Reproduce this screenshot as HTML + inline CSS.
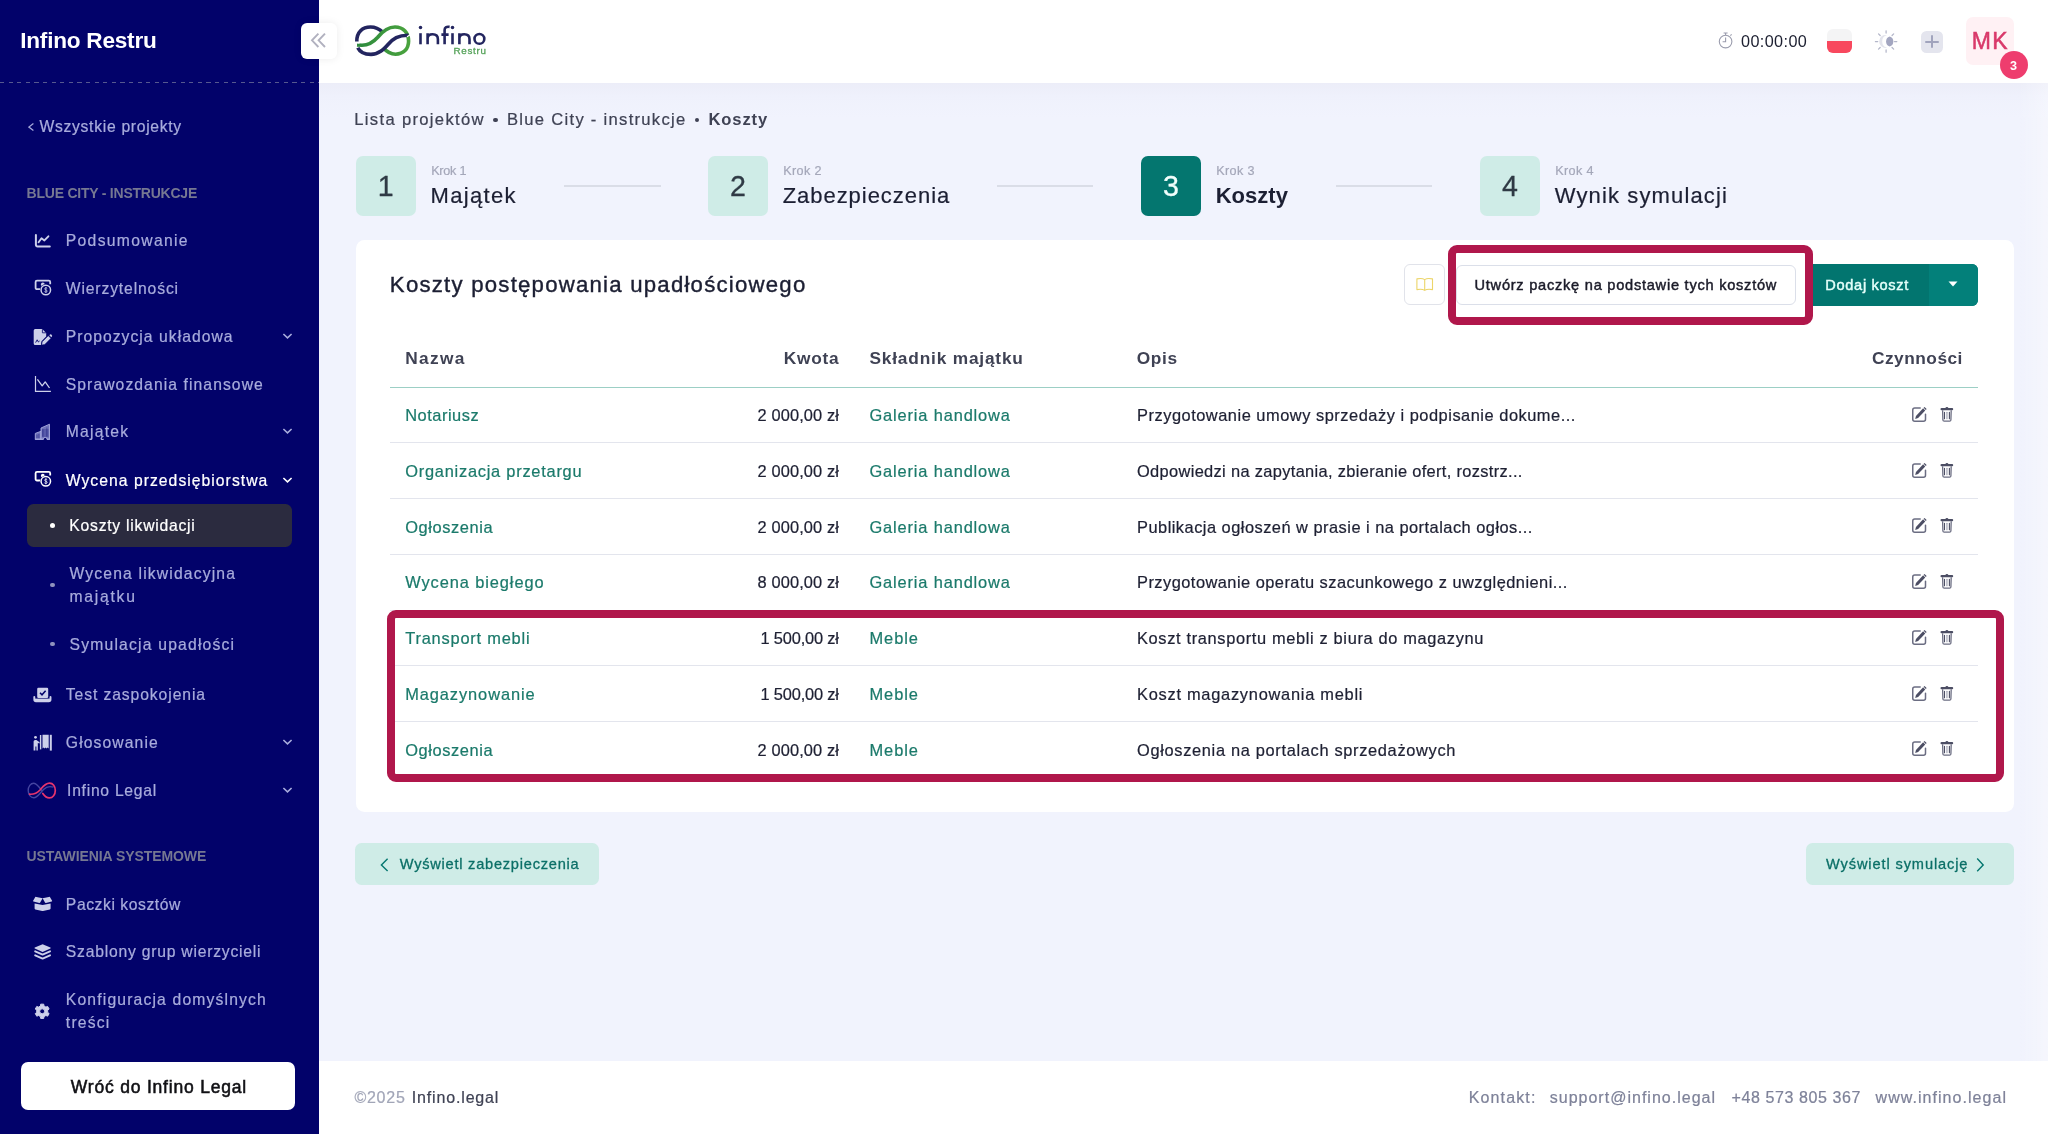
<!DOCTYPE html>
<html lang="pl"><head><meta charset="utf-8"><title>Infino Restru - Koszty</title><style>
html,body{margin:0;padding:0}
body{width:2048px;height:1134px;position:relative;overflow:hidden;background:#f1f3fd;will-change:transform;font-family:"Liberation Sans", sans-serif;}
.b{position:absolute;box-sizing:border-box;display:block}
.t{position:absolute;white-space:pre;line-height:1;font-family:"Liberation Sans", sans-serif;}
</style></head>
<body>
<div class="b" style="left:319px;top:0px;width:1729px;height:83px;background:#ffffff;"></div>
<div class="b" style="left:319px;top:83px;width:1729px;height:34px;background:linear-gradient(#ecedf8,#eff1fc 40%,#f1f3fd);"></div>
<div class="b" style="left:2018px;top:83px;width:30px;height:978px;background:linear-gradient(90deg,rgba(255,255,255,0),rgba(255,255,255,.32));"></div>
<div class="b" style="left:319px;top:1061px;width:1729px;height:73px;background:#ffffff;"></div>
<div class="b" style="left:0px;top:0px;width:319px;height:1134px;background:#02026a;"></div>
<div class="b" style="left:0;top:82px;width:319px;height:1px;background:repeating-linear-gradient(90deg,#56588f 0,#56588f 4.2px,transparent 4.2px,transparent 8.6px)"></div>
<span class="t" style="left:20.24px;top:30.27px;font-size:22.6px;color:#ffffff;font-weight:700;letter-spacing:-0.234px;">Infino Restru</span>
<div class="b" style="left:301px;top:22.5px;width:36px;height:36px;background:#ffffff;border-radius:6px;box-shadow:0 0 8px rgba(0,0,0,.08);"></div>
<svg class="b" style="left:310px;top:32px;" width="17" height="17" viewBox="0 0 17 17"><path d="M8.4 1.6 L2 8.3 L8.4 15 M15 1.6 L8.6 8.3 L15 15" fill="none" stroke="#b1b1bf" stroke-width="1.9"/></svg>
<span class="t" style="left:39.46px;top:119.01px;font-size:15.7px;color:#a8acdc;letter-spacing:0.697px;-webkit-text-stroke:0.22px #a8acdc;">Wszystkie projekty</span>
<svg class="b" style="left:28px;top:121px;" width="8" height="12" viewBox="0 0 8 12"><path d="M5.4 2.6 L0.9 6.1 L5.4 9.6" fill="none" stroke="#a8acdc" stroke-width="1.25"/></svg>
<span class="t" style="left:26.56px;top:186.35px;font-size:14px;color:#767892;font-weight:700;letter-spacing:-0.231px;">BLUE CITY - INSTRUKCJE</span>
<span class="t" style="left:65.76px;top:233.21px;font-size:15.7px;color:#a8acdc;letter-spacing:1.324px;-webkit-text-stroke:0.22px #a8acdc;">Podsumowanie</span>
<span class="t" style="left:65.76px;top:281.21px;font-size:15.7px;color:#a8acdc;letter-spacing:0.862px;-webkit-text-stroke:0.22px #a8acdc;">Wierzytelności</span>
<span class="t" style="left:65.76px;top:329.31px;font-size:15.7px;color:#a8acdc;letter-spacing:1.027px;-webkit-text-stroke:0.22px #a8acdc;">Propozycja układowa</span>
<svg class="b" style="left:281.9px;top:331.6px;" width="11" height="8" viewBox="0 0 11 8"><path d="M1.4 2 L5.5 5.9 L9.6 2" fill="none" stroke="#a8acdc" stroke-width="1.6"/></svg>
<span class="t" style="left:65.76px;top:377.21px;font-size:15.7px;color:#a8acdc;letter-spacing:1.077px;-webkit-text-stroke:0.22px #a8acdc;">Sprawozdania finansowe</span>
<span class="t" style="left:65.76px;top:424.11px;font-size:15.7px;color:#a8acdc;letter-spacing:1.233px;-webkit-text-stroke:0.22px #a8acdc;">Majątek</span>
<svg class="b" style="left:281.9px;top:427.4px;" width="11" height="8" viewBox="0 0 11 8"><path d="M1.4 2 L5.5 5.9 L9.6 2" fill="none" stroke="#a8acdc" stroke-width="1.6"/></svg>
<span class="t" style="left:65.76px;top:473.21px;font-size:15.7px;color:#ffffff;letter-spacing:1.042px;-webkit-text-stroke:0.22px #ffffff;">Wycena przedsiębiorstwa</span>
<svg class="b" style="left:281.9px;top:475.5px;" width="11" height="8" viewBox="0 0 11 8"><path d="M1.4 2 L5.5 5.9 L9.6 2" fill="none" stroke="#ffffff" stroke-width="1.6"/></svg>
<div class="b" style="left:27.1px;top:503.9px;width:264.6px;height:43.1px;background:#2b2b3f;border-radius:6.5px;"></div>
<div class="b" style="left:49.8px;top:522.8px;width:5.4px;height:5.4px;background:#ffffff;border-radius:3px;"></div>
<span class="t" style="left:69.36px;top:517.91px;font-size:15.7px;color:#ffffff;letter-spacing:0.756px;-webkit-text-stroke:0.22px #ffffff;">Koszty likwidacji</span>
<div class="b" style="left:50.3px;top:582.5px;width:4.4px;height:4.4px;background:#8f92bd;border-radius:2.2px;"></div>
<span class="t" style="left:69.56px;top:565.91px;font-size:15.7px;color:#a8acdc;letter-spacing:1.152px;-webkit-text-stroke:0.22px #a8acdc;">Wycena likwidacyjna</span>
<span class="t" style="left:69.56px;top:589.41px;font-size:15.7px;color:#a8acdc;letter-spacing:1.733px;-webkit-text-stroke:0.22px #a8acdc;">majątku</span>
<div class="b" style="left:50.3px;top:642.1px;width:4.4px;height:4.4px;background:#8f92bd;border-radius:2.2px;"></div>
<span class="t" style="left:69.56px;top:637.31px;font-size:15.7px;color:#a8acdc;letter-spacing:1.195px;-webkit-text-stroke:0.22px #a8acdc;">Symulacja upadłości</span>
<span class="t" style="left:65.86px;top:686.81px;font-size:15.7px;color:#a8acdc;letter-spacing:0.902px;-webkit-text-stroke:0.22px #a8acdc;">Test zaspokojenia</span>
<span class="t" style="left:65.86px;top:734.71px;font-size:15.7px;color:#a8acdc;letter-spacing:1.096px;-webkit-text-stroke:0.22px #a8acdc;">Głosowanie</span>
<svg class="b" style="left:281.9px;top:738.2px;" width="11" height="8" viewBox="0 0 11 8"><path d="M1.4 2 L5.5 5.9 L9.6 2" fill="none" stroke="#a8acdc" stroke-width="1.6"/></svg>
<span class="t" style="left:67.06px;top:783.11px;font-size:15.7px;color:#a8acdc;letter-spacing:0.728px;-webkit-text-stroke:0.22px #a8acdc;">Infino Legal</span>
<svg class="b" style="left:281.9px;top:786px;" width="11" height="8" viewBox="0 0 11 8"><path d="M1.4 2 L5.5 5.9 L9.6 2" fill="none" stroke="#a8acdc" stroke-width="1.6"/></svg>
<span class="t" style="left:26.56px;top:849.45px;font-size:14px;color:#767892;font-weight:700;letter-spacing:-0.076px;">USTAWIENIA SYSTEMOWE</span>
<span class="t" style="left:65.86px;top:897.21px;font-size:15.7px;color:#a8acdc;letter-spacing:0.562px;-webkit-text-stroke:0.22px #a8acdc;">Paczki kosztów</span>
<span class="t" style="left:65.86px;top:944.01px;font-size:15.7px;color:#a8acdc;letter-spacing:0.775px;-webkit-text-stroke:0.22px #a8acdc;">Szablony grup wierzycieli</span>
<span class="t" style="left:65.86px;top:991.71px;font-size:15.7px;color:#a8acdc;letter-spacing:1.160px;-webkit-text-stroke:0.22px #a8acdc;">Konfiguracja domyślnych</span>
<span class="t" style="left:65.86px;top:1015.41px;font-size:15.7px;color:#a8acdc;letter-spacing:1.170px;-webkit-text-stroke:0.22px #a8acdc;">treści</span>
<div class="b" style="left:21px;top:1062px;width:274px;height:48px;background:#ffffff;border-radius:7px;"></div>
<span class="t" style="left:70.76px;top:1078.99px;font-size:17.5px;color:#101014;letter-spacing:0.804px;-webkit-text-stroke:0.55px #101014;">Wróć do Infino Legal</span>
<svg class="b" style="left:34px;top:233px;overflow:visible;" width="18" height="16" viewBox="34 233 18 16"><path d="M35.9 234.9 V244.8 A1.6 1.6 0 0 0 37.5 246.4 H49.8" fill="none" stroke="#cdd0ea" stroke-width="2" stroke-linecap="round"/><path d="M38.6 242.2 L41.5 238.3 L44.4 240.4 L48.4 236.3" fill="none" stroke="#cdd0ea" stroke-width="1.9" stroke-linecap="round" stroke-linejoin="round"/></svg>
<svg class="b" style="left:34px;top:279px;overflow:visible;" width="18" height="18" viewBox="34 279 18 18"><g transform="translate(0,0)"><path d="M40.5 289.2 H37 A1.4 1.4 0 0 1 35.6 287.8 V282 A1.4 1.4 0 0 1 37 280.6 H48.8 A1.4 1.4 0 0 1 50.2 282 V284.2" fill="none" stroke="#cdd0ea" stroke-width="1.8"/><circle cx="42.8" cy="284.4" r="1.9" fill="#cdd0ea"/><circle cx="45.8" cy="290" r="5.9" fill="#02026a"/><circle cx="45.8" cy="290" r="4.75" fill="none" stroke="#cdd0ea" stroke-width="1.5"/><path d="M47.2 288.4 C46.6 287.6 44.6 287.7 44.6 288.9 C44.6 290.2 47.2 289.7 47.2 291.1 C47.2 292.3 45.1 292.4 44.4 291.5 M45.9 287 V293" fill="none" stroke="#cdd0ea" stroke-width="0.8"/></g></svg>
<svg class="b" style="left:33px;top:328px;overflow:visible;" width="19" height="18" viewBox="33 328 19 18"><path d="M35.2 329 H42.2 L46.2 333 V336.5 L41.5 341.2 L40.9 345 H35.2 A1.5 1.5 0 0 1 33.7 343.5 V330.5 A1.5 1.5 0 0 1 35.2 329 Z" fill="#cdd0ea"/><path d="M42.4 329.2 V332.8 H46" fill="none" stroke="#02026a" stroke-width="0.8"/><path d="M35.6 342.6 L37.2 339.8 L38.4 342 L39.6 341" fill="none" stroke="#02026a" stroke-width="0.9"/><path d="M42.2 341.8 L48.3 335.7 L50.9 338.3 L44.8 344.4 L41.7 345 Z" fill="#cdd0ea" stroke="#02026a" stroke-width="0.5"/><path d="M49.3 335.3 L50 334.6 A1 1 0 0 1 51.3 334.6 L51.9 335.3 A1 1 0 0 1 51.9 336.6 L51.3 337.3 Z" fill="#cdd0ea"/></svg>
<svg class="b" style="left:34px;top:375px;overflow:visible;" width="18" height="18" viewBox="34 375 18 18"><path d="M35.5 376 V391.3 H50.9" fill="none" stroke="#cdd0ea" stroke-width="1.2"/><path d="M37.4 379.4 L42.2 385.8 L45.2 381.9 L49.5 388" fill="none" stroke="#cdd0ea" stroke-width="1.3" stroke-linejoin="round"/></svg>
<svg class="b" style="left:34px;top:423px;overflow:visible;" width="17" height="17" viewBox="34 423 17 17"><path d="M35.3 439.2 V433.4 L41 431.3 V439.2 Z" fill="#6f72bb" stroke="#a9acdf" stroke-width="0.9" stroke-linejoin="round"/><path d="M41 439.2 V428 L49.5 424.2 V439.2 H47 A1.8 1.8 0 0 0 43.4 439.2 Z" fill="#6f72bb" stroke="#a9acdf" stroke-width="0.9" stroke-linejoin="round"/><path d="M37 434.6 V438.4 M38.9 434 V438.4 M42.9 429.4 V436.6 M46.9 427.6 V436.6 M42 430 H48.6 M42 432 H48.6 M42 434 H48.6 M42 436 H48.6" stroke="#02026a" stroke-width="0.7" stroke-opacity="0.6" fill="none"/><path d="M34.9 439.3 H43.6 M46.8 439.3 H50" stroke="#a9acdf" stroke-width="1"/></svg>
<svg class="b" style="left:34px;top:470px;overflow:visible;" width="18" height="18" viewBox="34 470 18 18"><g transform="translate(0,191.3)"><path d="M40.5 289.2 H37 A1.4 1.4 0 0 1 35.6 287.8 V282 A1.4 1.4 0 0 1 37 280.6 H48.8 A1.4 1.4 0 0 1 50.2 282 V284.2" fill="none" stroke="#ffffff" stroke-width="1.8"/><circle cx="42.8" cy="284.4" r="1.9" fill="#ffffff"/><circle cx="45.8" cy="290" r="5.9" fill="#02026a"/><circle cx="45.8" cy="290" r="4.75" fill="none" stroke="#ffffff" stroke-width="1.5"/><path d="M47.2 288.4 C46.6 287.6 44.6 287.7 44.6 288.9 C44.6 290.2 47.2 289.7 47.2 291.1 C47.2 292.3 45.1 292.4 44.4 291.5 M45.9 287 V293" fill="none" stroke="#ffffff" stroke-width="0.8"/></g></svg>
<svg class="b" style="left:33px;top:687px;overflow:visible;" width="19" height="16" viewBox="33 687 19 16"><rect x="37.2" y="687.8" width="11" height="10.2" rx="1.2" fill="#cdd0ea"/><path d="M40 692.8 L42 694.8 L45.6 690.8" fill="none" stroke="#02026a" stroke-width="1.5"/><path d="M34.3 697 V699.6 A1.7 1.7 0 0 0 36 701.3 H48.8 A1.7 1.7 0 0 0 50.5 699.6 V697" fill="none" stroke="#cdd0ea" stroke-width="1.9" stroke-linecap="round"/><rect x="35" y="698.6" width="15" height="2.8" fill="#cdd0ea"/></svg>
<svg class="b" style="left:33px;top:734px;overflow:visible;" width="19" height="17" viewBox="33 734 19 17"><circle cx="35.5" cy="737.3" r="1.4" fill="#cdd0ea"/><path d="M33.6 750.6 V741.6 A1.6 1.6 0 0 1 35.2 740 H36.4 L39.6 742.2 V743.6 L37.8 743 V750.6 H36.4 V746.5 H35.4 V750.6 Z" fill="#cdd0ea"/><rect x="39.9" y="735" width="1.4" height="14.4" fill="#cdd0ea"/><path d="M42.5 734.8 H48.7 V748.4 L47.6 747.4 L46.6 748.4 L45.6 747.4 L44.6 748.4 L43.6 747.4 L42.5 748.4 Z" fill="#cdd0ea"/><rect x="49.8" y="734.8" width="2" height="15.8" fill="#cdd0ea"/></svg>
<svg class="b" style="left:26px;top:781px;overflow:visible;" width="32" height="19" viewBox="26 781 32 19"><path d="M41.6 790.5 C38.5 786 36.5 783.3 33.8 783.3 C30.5 783.3 28.2 786.6 28.2 790.5 C28.2 794.4 30.6 797.7 33.8 797.7 C37.5 797.7 39.5 793.5 43.5 789.5 C46.5 786.5 50.5 786.2 53.5 787.2" fill="none" stroke="#4545a0" stroke-width="1.4"/><path d="M29.5 794.2 C34 794.6 37 793.2 40 790 C43 786.5 45.5 783.2 49.5 783.2 C53 783.2 55.3 786.4 55.3 790.4 C55.3 794.6 52.8 797.9 49.3 797.9 C46.4 797.9 44.3 795.6 42.8 793.4" fill="none" stroke="#e8356d" stroke-width="1.7" stroke-linecap="round"/></svg>
<svg class="b" style="left:32px;top:896px;overflow:visible;" width="21" height="16" viewBox="32 896 21 16"><path d="M34.6 903.4 L42.6 905 L50.6 903.4 V908.6 A1 1 0 0 1 49.9 909.5 L43 911 A1.6 1.6 0 0 1 42.2 911 L35.3 909.5 A1 1 0 0 1 34.6 908.6 Z" fill="#cdd0ea"/><path d="M36.4 897.1 L42.6 898.2 L40.2 902.6 A0.8 0.8 0 0 1 39.3 903 L33.5 901.6 A0.6 0.6 0 0 1 33.1 900.8 L35 897.6 A0.9 0.9 0 0 1 36.4 897.1 Z M48.8 897.1 L42.6 898.2 L45 902.6 A0.8 0.8 0 0 0 45.9 903 L51.7 901.6 A0.6 0.6 0 0 0 52.1 900.8 L50.2 897.6 A0.9 0.9 0 0 0 48.8 897.1 Z" fill="#cdd0ea"/></svg>
<svg class="b" style="left:34px;top:943px;overflow:visible;" width="18" height="18" viewBox="34 943 18 18"><path d="M42.6 944.2 L50.4 947.6 A0.5 0.5 0 0 1 50.4 948.5 L42.6 951.9 L34.8 948.5 A0.5 0.5 0 0 1 34.8 947.6 Z" fill="#cdd0ea"/><path d="M35.2 951.4 L42.6 954.6 L50 951.4 M35.2 955.4 L42.6 958.6 L50 955.4" fill="none" stroke="#cdd0ea" stroke-width="2" stroke-linejoin="round" stroke-linecap="round"/></svg>
<svg class="b" style="left:34px;top:1003px;overflow:visible;" width="17" height="17" viewBox="34 1003 17 17"><path d="M40.44 1005.98 L40.68 1004.16 L43.72 1004.16 L43.96 1005.98 L45.92 1007.12 L47.62 1006.41 L49.14 1009.05 L47.68 1010.17 L47.68 1012.43 L49.14 1013.55 L47.62 1016.19 L45.92 1015.48 L43.96 1016.62 L43.72 1018.44 L40.68 1018.44 L40.44 1016.62 L38.48 1015.48 L36.78 1016.19 L35.26 1013.55 L36.72 1012.43 L36.72 1010.17 L35.26 1009.05 L36.78 1006.41 L38.48 1007.12 Z M44.70 1011.30 A2.5 2.5 0 1 0 39.70 1011.30 A2.5 2.5 0 1 0 44.70 1011.30 Z" fill="#cdd0ea" fill-rule="evenodd" stroke="#cdd0ea" stroke-width="1" stroke-linejoin="round"/></svg>
<svg class="b" style="left:354px;top:24px;overflow:visible;" width="58" height="34" viewBox="354 24 58 34"><defs><linearGradient id="lg1" x1="0" x2="1"><stop offset="0" stop-color="#2d8a3e"/><stop offset="1" stop-color="#4aa33e"/></linearGradient></defs><path d="M356.8 41.5 C356.6 32 362.5 27 370.5 27 C376.5 27 380 29.6 383 32.4" fill="none" stroke="#23255f" stroke-width="3.6" stroke-linecap="butt"/><path d="M357 45 L362 45.2 C369 45.2 373.5 42 377.5 37.5 C382 32 387.5 27 395 27 C403.5 27 408.6 33 408.6 41 C408.6 49 403.5 54.2 395.5 54.2 C390 54.2 386.5 51.5 383 47.5" fill="none" stroke="url(#lg1)" stroke-width="3.6"/><path d="M357.8 47.8 C360 52.5 365 54.4 371 54.4 C379 54.4 384 49 388.5 44 C393 39 398 35 408.5 35.2" fill="none" stroke="#23255f" stroke-width="3.6"/><path d="M355 42.5 L359.5 43.2 M407 36.8 L411 34.2" stroke="#ffffff" stroke-width="1.2"/></svg>
<svg class="b" style="left:417px;top:24px;overflow:visible;" width="71" height="22" viewBox="417 24 71 22"><g fill="none" stroke="#23255f" stroke-width="2.6"><path d="M420.5 33.2 V44.3"/><path d="M427.6 33.2 V44.3 M427.6 38.6 C427.6 35.6 429.8 34.3 432.6 34.3 C435.6 34.3 437.9 35.8 437.9 39.2 V44.3"/><path d="M444.6 44.3 V30 C444.6 27.4 446.2 26.4 449.6 26.9 M441.4 34.6 H448.6"/><path d="M452.5 33.2 V44.3"/><path d="M459.4 33.2 V44.3 M459.4 38.6 C459.4 35.6 461.6 34.3 464.3 34.3 C467.2 34.3 469.5 35.8 469.5 39.2 V44.3"/><circle cx="479.4" cy="38.9" r="4.9"/></g><circle cx="420.5" cy="27.4" r="1.75" fill="#23255f"/><circle cx="452.5" cy="27.4" r="1.75" fill="#23255f"/></svg>
<span class="t" style="left:453.61px;top:45.60px;font-size:9.8px;color:#55a259;letter-spacing:0.675px;-webkit-text-stroke:0.3px #55a259;">Restru</span>
<svg class="b" style="left:1717px;top:31px;overflow:visible;" width="18" height="19" viewBox="1717 31 18 19"><circle cx="1725.6" cy="41.6" r="6.3" fill="none" stroke="#9a9cad" stroke-width="1.1"/><path d="M1723.6 33 H1727.6 M1725.6 33 V35.2 M1730.4 35.6 L1731.6 34.4 M1725.6 37.6 V41.8 H1722.6" fill="none" stroke="#9a9cad" stroke-width="1.1"/></svg>
<div class="b" style="left:1827px;top:29.3px;width:24.6px;height:23.7px;border-radius:6px;overflow:hidden;background:#f4f4f5"><div style="position:absolute;left:0;right:0;top:11.8px;bottom:0;background:#f8485e"></div></div>
<svg class="b" style="left:1874px;top:30px;overflow:visible;" width="24" height="24" viewBox="1874 30 24 24"><path d="M1894.50 41.50 L1896.80 41.50" stroke="#b3b6c9" stroke-width="1.25" stroke-linecap="round"/><path d="M1892.04 47.44 L1893.67 49.07" stroke="#b3b6c9" stroke-width="1.25" stroke-linecap="round"/><path d="M1886.10 49.90 L1886.10 52.20" stroke="#b3b6c9" stroke-width="1.25" stroke-linecap="round"/><path d="M1880.16 47.44 L1878.53 49.07" stroke="#b3b6c9" stroke-width="1.25" stroke-linecap="round"/><path d="M1877.70 41.50 L1875.40 41.50" stroke="#b3b6c9" stroke-width="1.25" stroke-linecap="round"/><path d="M1880.16 35.56 L1878.53 33.93" stroke="#b3b6c9" stroke-width="1.25" stroke-linecap="round"/><path d="M1886.10 33.10 L1886.10 30.80" stroke="#b3b6c9" stroke-width="1.25" stroke-linecap="round"/><path d="M1892.04 35.56 L1893.67 33.93" stroke="#b3b6c9" stroke-width="1.25" stroke-linecap="round"/><path d="M1887 35.05 A6.5 6.5 0 1 0 1887 47.75 A6.6 6.6 0 0 1 1887 35.05 Z" fill="#e3e4ec"/><path d="M1889.7 36.6 A5.27 5.27 0 0 1 1889.7 46.6 A5.27 5.27 0 0 1 1889.7 36.6 Z" fill="#a3a6c0"/></svg>
<div class="b" style="left:1921px;top:30.5px;width:22px;height:22.2px;background:#e4e5ee;border-radius:5.5px;"></div>
<div class="b" style="left:1925.2px;top:40.55px;width:13.4px;height:2.1px;background:#a1a4bd;border-radius:1px;"></div>
<div class="b" style="left:1930.85px;top:34.9px;width:2.1px;height:13.4px;background:#a1a4bd;border-radius:1px;"></div>
<div class="b" style="left:1965.7px;top:17.4px;width:48.3px;height:47.6px;background:#fff1f4;border-radius:7px;"></div>
<span class="t" style="left:1741.03px;top:32.89px;font-size:16.2px;color:#1c1f30;letter-spacing:0.394px;">00:00:00</span>
<span class="t" style="left:1971.82px;top:30.13px;font-size:23px;color:#d9396a;letter-spacing:1.255px;-webkit-text-stroke:0.5px #d9396a;">MK</span>
<div class="b" style="left:2000.1px;top:50.9px;width:27.9px;height:27.9px;background:#ee3d6e;border-radius:14px;"></div>
<span class="t" style="left:2010.09px;top:60.13px;font-size:12.6px;color:#ffffff;font-weight:700;">3</span>
<span class="t" style="left:354.30px;top:112.15px;font-size:16.6px;color:#3f4254;letter-spacing:1.323px;-webkit-text-stroke:0.22px #3f4254;">Lista projektów</span>
<div class="b" style="left:493.4px;top:117.6px;width:4.8px;height:4.8px;background:#3f4254;border-radius:2.4px;"></div>
<span class="t" style="left:507.00px;top:112.15px;font-size:16.6px;color:#3f4254;letter-spacing:1.285px;-webkit-text-stroke:0.22px #3f4254;">Blue City - instrukcje</span>
<div class="b" style="left:694.5px;top:117.6px;width:4.8px;height:4.8px;background:#3f4254;border-radius:2.4px;"></div>
<span class="t" style="left:708.50px;top:112.15px;font-size:16.6px;color:#3f4254;font-weight:700;letter-spacing:0.861px;">Koszty</span>
<div class="b" style="left:355.7px;top:156.1px;width:60.2px;height:60.3px;background:#cfece7;border-radius:7px;"></div>
<span class="t" style="left:377.85px;top:172.29px;font-size:28.6px;color:#2f3a45;-webkit-text-stroke:0.3px #2f3a45;">1</span>
<span class="t" style="left:431.14px;top:165.03px;font-size:12.6px;color:#a4a7b9;letter-spacing:-0.227px;-webkit-text-stroke:0.22px #a4a7b9;">Krok 1</span>
<span class="t" style="left:430.58px;top:184.78px;font-size:22px;color:#1c1f33;letter-spacing:1.321px;-webkit-text-stroke:0.22px #1c1f33;">Majątek</span>
<div class="b" style="left:707.8px;top:156.1px;width:60.2px;height:60.3px;background:#cfece7;border-radius:7px;"></div>
<span class="t" style="left:729.95px;top:172.29px;font-size:28.6px;color:#2f3a45;-webkit-text-stroke:0.3px #2f3a45;">2</span>
<span class="t" style="left:783.24px;top:165.03px;font-size:12.6px;color:#a4a7b9;letter-spacing:0.353px;-webkit-text-stroke:0.22px #a4a7b9;">Krok 2</span>
<span class="t" style="left:782.68px;top:184.78px;font-size:22px;color:#1c1f33;letter-spacing:0.959px;-webkit-text-stroke:0.22px #1c1f33;">Zabezpieczenia</span>
<div class="b" style="left:1140.8px;top:156.1px;width:60.2px;height:60.3px;background:#04766f;border-radius:7px;"></div>
<span class="t" style="left:1162.95px;top:172.29px;font-size:28.6px;color:#f2fffc;-webkit-text-stroke:0.3px #f2fffc;">3</span>
<span class="t" style="left:1216.24px;top:165.03px;font-size:12.6px;color:#a4a7b9;letter-spacing:0.353px;-webkit-text-stroke:0.22px #a4a7b9;">Krok 3</span>
<span class="t" style="left:1215.68px;top:184.78px;font-size:22px;color:#1c1f33;font-weight:700;letter-spacing:0.029px;">Koszty</span>
<div class="b" style="left:1479.8px;top:156.1px;width:60.2px;height:60.3px;background:#cfece7;border-radius:7px;"></div>
<span class="t" style="left:1501.95px;top:172.29px;font-size:28.6px;color:#2f3a45;-webkit-text-stroke:0.3px #2f3a45;">4</span>
<span class="t" style="left:1555.24px;top:165.03px;font-size:12.6px;color:#a4a7b9;letter-spacing:0.353px;-webkit-text-stroke:0.22px #a4a7b9;">Krok 4</span>
<span class="t" style="left:1554.68px;top:184.78px;font-size:22px;color:#1c1f33;letter-spacing:1.142px;-webkit-text-stroke:0.22px #1c1f33;">Wynik symulacji</span>
<div class="b" style="left:564.2px;top:185.1px;width:96.4px;height:1.5px;background:#dadde7;"></div>
<div class="b" style="left:997px;top:185.1px;width:96.4px;height:1.5px;background:#dadde7;"></div>
<div class="b" style="left:1336px;top:185.1px;width:96.4px;height:1.5px;background:#dadde7;"></div>
<div class="b" style="left:355.8px;top:240.1px;width:1658.2px;height:571.6px;background:#ffffff;border-radius:8.5px;"></div>
<span class="t" style="left:389.87px;top:274.21px;font-size:22.2px;color:#1c1f33;letter-spacing:1.225px;-webkit-text-stroke:0.4px #1c1f33;">Koszty postępowania upadłościowego</span>
<div class="b" style="left:1404px;top:264px;width:41px;height:41px;background:#ffffff;border-radius:6px;border:1px solid #e1e3ea;"></div>
<svg class="b" style="left:1415px;top:276px;overflow:visible;" width="20" height="17" viewBox="1415 276 20 17"><path d="M1424.7 279.6 C1423 278.4 1420 278.2 1416.9 278.9 V289.6 C1420 288.9 1423 289.2 1424.7 290.4 C1426.4 289.2 1429.4 288.9 1432.5 289.6 V278.9 C1429.4 278.2 1426.4 278.4 1424.7 279.6 Z M1424.7 279.6 V290.4" fill="none" stroke="#ecd56a" stroke-width="1.1" stroke-linejoin="round"/></svg>
<div class="b" style="left:1456px;top:264.5px;width:340px;height:40.5px;background:#ffffff;border-radius:6px;border:1px solid #dbdfe9;"></div>
<span class="t" style="left:1474.52px;top:278.34px;font-size:14.6px;color:#1b1b29;letter-spacing:0.750px;-webkit-text-stroke:0.45px #1b1b29;">Utwórz paczkę na podstawie tych kosztów</span>
<div class="b" style="left:1806px;top:264.4px;width:172px;height:41.3px;background:#02756f;border-radius:6px;"></div>
<div class="b" style="left:1928.5px;top:264.4px;width:49.5px;height:41.3px;background:#03807a;border-radius:0 6px 6px 0;"></div>
<span class="t" style="left:1825.32px;top:278.14px;font-size:14.6px;color:#e4fffa;letter-spacing:0.679px;-webkit-text-stroke:0.45px #e4fffa;">Dodaj koszt</span>
<svg class="b" style="left:1948px;top:281px;" width="10" height="6" viewBox="0 0 10 6"><path d="M0.5 0.5 L9.5 0.5 L5 5.5 Z" fill="#ffffff"/></svg>
<div class="b" style="left:1448px;top:244.7px;width:365.2px;height:80.8px;background:transparent;border-radius:9px;border:8px solid #b0174b;"></div>
<span class="t" style="left:405.16px;top:349.66px;font-size:17.3px;color:#3f4254;font-weight:700;letter-spacing:1.343px;">Nazwa</span>
<span class="t" style="left:783.66px;top:349.66px;font-size:17.3px;color:#3f4254;font-weight:700;letter-spacing:0.782px;">Kwota</span>
<span class="t" style="left:869.46px;top:349.66px;font-size:17.3px;color:#3f4254;font-weight:700;letter-spacing:0.819px;">Składnik majątku</span>
<span class="t" style="left:1136.66px;top:349.66px;font-size:17.3px;color:#3f4254;font-weight:700;letter-spacing:0.683px;">Opis</span>
<span class="t" style="left:1871.96px;top:349.66px;font-size:17.3px;color:#3f4254;font-weight:700;letter-spacing:0.504px;">Czynności</span>
<div class="b" style="left:390px;top:386.7px;width:1588px;height:1.2px;background:#9ccfc5;"></div>
<span class="t" style="left:405.22px;top:407.32px;font-size:16.4px;color:#1b7a6b;letter-spacing:0.520px;-webkit-text-stroke:0.22px #1b7a6b;">Notariusz</span>
<span class="t" style="left:757.52px;top:407.32px;font-size:16.4px;color:#1e2033;letter-spacing:0.119px;-webkit-text-stroke:0.22px #1e2033;">2 000,00 zł</span>
<span class="t" style="left:869.52px;top:407.32px;font-size:16.4px;color:#1b7a6b;letter-spacing:0.854px;-webkit-text-stroke:0.22px #1b7a6b;">Galeria handlowa</span>
<span class="t" style="left:1137.02px;top:407.32px;font-size:16.4px;color:#1e2033;letter-spacing:0.521px;-webkit-text-stroke:0.22px #1e2033;">Przygotowanie umowy sprzedaży i podpisanie dokume...</span>
<svg class="b" style="left:1910px;top:404.00px" width="46" height="22" viewBox="1910 404 46 22"><g><path d="M1920.2 408.05 H1914.75 A2 2 0 0 0 1912.75 410.05 V419.25 A2 2 0 0 0 1914.75 421.25 H1923.5 A2 2 0 0 0 1925.5 419.25 V414.3" fill="none" stroke="#6b6d82" stroke-width="1.5" stroke-linecap="round"/><path d="M1915.2 418.9 L1918.1 418.12 L1925.25 410.47 L1923.13 408.35 L1915.98 416 Z" fill="#4c4e64"/><path d="M1925.74 409.98 L1926.66 409.06 L1924.54 406.94 L1923.62 407.86 Z" fill="#4c4e64"/><rect x="1940.5" y="408" width="12.7" height="2.3" rx="1.1" fill="#4c4e64"/><path d="M1945.4 408.2 A1.5 1.2 0 0 1 1948.4 408.2 Z" fill="#4c4e64"/><path d="M1942.6 410.2 L1942.9 420 A1.3 1.3 0 0 0 1944.2 421.2 H1949.6 A1.3 1.3 0 0 0 1950.9 420 L1951.2 410.2" fill="none" stroke="#6b6d82" stroke-width="1.3"/><path d="M1944.5 412.3 V418.8 M1949.4 412.3 V418.8" stroke="#4c4e64" stroke-width="1.1" stroke-linecap="round"/><path d="M1946.95 412.3 V418.8" stroke="#9a9cad" stroke-width="1.1" stroke-linecap="round"/></g></svg>
<div class="b" style="left:390px;top:442.40000000000003px;width:1588px;height:1px;background:#e3e5ed;"></div>
<span class="t" style="left:405.22px;top:463.05px;font-size:16.4px;color:#1b7a6b;letter-spacing:0.756px;-webkit-text-stroke:0.22px #1b7a6b;">Organizacja przetargu</span>
<span class="t" style="left:757.52px;top:463.05px;font-size:16.4px;color:#1e2033;letter-spacing:0.119px;-webkit-text-stroke:0.22px #1e2033;">2 000,00 zł</span>
<span class="t" style="left:869.52px;top:463.05px;font-size:16.4px;color:#1b7a6b;letter-spacing:0.854px;-webkit-text-stroke:0.22px #1b7a6b;">Galeria handlowa</span>
<span class="t" style="left:1137.02px;top:463.05px;font-size:16.4px;color:#1e2033;letter-spacing:0.340px;-webkit-text-stroke:0.22px #1e2033;">Odpowiedzi na zapytania, zbieranie ofert, rozstrz...</span>
<svg class="b" style="left:1910px;top:459.73px" width="46" height="22" viewBox="1910 404 46 22"><g><path d="M1920.2 408.05 H1914.75 A2 2 0 0 0 1912.75 410.05 V419.25 A2 2 0 0 0 1914.75 421.25 H1923.5 A2 2 0 0 0 1925.5 419.25 V414.3" fill="none" stroke="#6b6d82" stroke-width="1.5" stroke-linecap="round"/><path d="M1915.2 418.9 L1918.1 418.12 L1925.25 410.47 L1923.13 408.35 L1915.98 416 Z" fill="#4c4e64"/><path d="M1925.74 409.98 L1926.66 409.06 L1924.54 406.94 L1923.62 407.86 Z" fill="#4c4e64"/><rect x="1940.5" y="408" width="12.7" height="2.3" rx="1.1" fill="#4c4e64"/><path d="M1945.4 408.2 A1.5 1.2 0 0 1 1948.4 408.2 Z" fill="#4c4e64"/><path d="M1942.6 410.2 L1942.9 420 A1.3 1.3 0 0 0 1944.2 421.2 H1949.6 A1.3 1.3 0 0 0 1950.9 420 L1951.2 410.2" fill="none" stroke="#6b6d82" stroke-width="1.3"/><path d="M1944.5 412.3 V418.8 M1949.4 412.3 V418.8" stroke="#4c4e64" stroke-width="1.1" stroke-linecap="round"/><path d="M1946.95 412.3 V418.8" stroke="#9a9cad" stroke-width="1.1" stroke-linecap="round"/></g></svg>
<div class="b" style="left:390px;top:498.13000000000005px;width:1588px;height:1px;background:#e3e5ed;"></div>
<span class="t" style="left:405.22px;top:518.78px;font-size:16.4px;color:#1b7a6b;letter-spacing:0.598px;-webkit-text-stroke:0.22px #1b7a6b;">Ogłoszenia</span>
<span class="t" style="left:757.52px;top:518.78px;font-size:16.4px;color:#1e2033;letter-spacing:0.119px;-webkit-text-stroke:0.22px #1e2033;">2 000,00 zł</span>
<span class="t" style="left:869.52px;top:518.78px;font-size:16.4px;color:#1b7a6b;letter-spacing:0.854px;-webkit-text-stroke:0.22px #1b7a6b;">Galeria handlowa</span>
<span class="t" style="left:1137.02px;top:518.78px;font-size:16.4px;color:#1e2033;letter-spacing:0.482px;-webkit-text-stroke:0.22px #1e2033;">Publikacja ogłoszeń w prasie i na portalach ogłos...</span>
<svg class="b" style="left:1910px;top:515.46px" width="46" height="22" viewBox="1910 404 46 22"><g><path d="M1920.2 408.05 H1914.75 A2 2 0 0 0 1912.75 410.05 V419.25 A2 2 0 0 0 1914.75 421.25 H1923.5 A2 2 0 0 0 1925.5 419.25 V414.3" fill="none" stroke="#6b6d82" stroke-width="1.5" stroke-linecap="round"/><path d="M1915.2 418.9 L1918.1 418.12 L1925.25 410.47 L1923.13 408.35 L1915.98 416 Z" fill="#4c4e64"/><path d="M1925.74 409.98 L1926.66 409.06 L1924.54 406.94 L1923.62 407.86 Z" fill="#4c4e64"/><rect x="1940.5" y="408" width="12.7" height="2.3" rx="1.1" fill="#4c4e64"/><path d="M1945.4 408.2 A1.5 1.2 0 0 1 1948.4 408.2 Z" fill="#4c4e64"/><path d="M1942.6 410.2 L1942.9 420 A1.3 1.3 0 0 0 1944.2 421.2 H1949.6 A1.3 1.3 0 0 0 1950.9 420 L1951.2 410.2" fill="none" stroke="#6b6d82" stroke-width="1.3"/><path d="M1944.5 412.3 V418.8 M1949.4 412.3 V418.8" stroke="#4c4e64" stroke-width="1.1" stroke-linecap="round"/><path d="M1946.95 412.3 V418.8" stroke="#9a9cad" stroke-width="1.1" stroke-linecap="round"/></g></svg>
<div class="b" style="left:390px;top:553.86px;width:1588px;height:1px;background:#e3e5ed;"></div>
<span class="t" style="left:405.22px;top:573.51px;font-size:16.4px;color:#1b7a6b;letter-spacing:0.913px;-webkit-text-stroke:0.22px #1b7a6b;">Wycena biegłego</span>
<span class="t" style="left:757.52px;top:573.51px;font-size:16.4px;color:#1e2033;letter-spacing:0.119px;-webkit-text-stroke:0.22px #1e2033;">8 000,00 zł</span>
<span class="t" style="left:869.52px;top:573.51px;font-size:16.4px;color:#1b7a6b;letter-spacing:0.854px;-webkit-text-stroke:0.22px #1b7a6b;">Galeria handlowa</span>
<span class="t" style="left:1137.02px;top:573.51px;font-size:16.4px;color:#1e2033;letter-spacing:0.471px;-webkit-text-stroke:0.22px #1e2033;">Przygotowanie operatu szacunkowego z uwzględnieni...</span>
<svg class="b" style="left:1910px;top:571.19px" width="46" height="22" viewBox="1910 404 46 22"><g><path d="M1920.2 408.05 H1914.75 A2 2 0 0 0 1912.75 410.05 V419.25 A2 2 0 0 0 1914.75 421.25 H1923.5 A2 2 0 0 0 1925.5 419.25 V414.3" fill="none" stroke="#6b6d82" stroke-width="1.5" stroke-linecap="round"/><path d="M1915.2 418.9 L1918.1 418.12 L1925.25 410.47 L1923.13 408.35 L1915.98 416 Z" fill="#4c4e64"/><path d="M1925.74 409.98 L1926.66 409.06 L1924.54 406.94 L1923.62 407.86 Z" fill="#4c4e64"/><rect x="1940.5" y="408" width="12.7" height="2.3" rx="1.1" fill="#4c4e64"/><path d="M1945.4 408.2 A1.5 1.2 0 0 1 1948.4 408.2 Z" fill="#4c4e64"/><path d="M1942.6 410.2 L1942.9 420 A1.3 1.3 0 0 0 1944.2 421.2 H1949.6 A1.3 1.3 0 0 0 1950.9 420 L1951.2 410.2" fill="none" stroke="#6b6d82" stroke-width="1.3"/><path d="M1944.5 412.3 V418.8 M1949.4 412.3 V418.8" stroke="#4c4e64" stroke-width="1.1" stroke-linecap="round"/><path d="M1946.95 412.3 V418.8" stroke="#9a9cad" stroke-width="1.1" stroke-linecap="round"/></g></svg>
<div class="b" style="left:390px;top:609.59px;width:1588px;height:1px;background:#e3e5ed;"></div>
<span class="t" style="left:405.22px;top:630.24px;font-size:16.4px;color:#1b7a6b;letter-spacing:0.795px;-webkit-text-stroke:0.22px #1b7a6b;">Transport mebli</span>
<span class="t" style="left:760.52px;top:630.24px;font-size:16.4px;color:#1e2033;letter-spacing:-0.181px;-webkit-text-stroke:0.22px #1e2033;">1 500,00 zł</span>
<span class="t" style="left:869.52px;top:630.24px;font-size:16.4px;color:#1b7a6b;letter-spacing:0.934px;-webkit-text-stroke:0.22px #1b7a6b;">Meble</span>
<span class="t" style="left:1137.02px;top:630.24px;font-size:16.4px;color:#1e2033;letter-spacing:0.649px;-webkit-text-stroke:0.22px #1e2033;">Koszt transportu mebli z biura do magazynu</span>
<svg class="b" style="left:1910px;top:626.92px" width="46" height="22" viewBox="1910 404 46 22"><g><path d="M1920.2 408.05 H1914.75 A2 2 0 0 0 1912.75 410.05 V419.25 A2 2 0 0 0 1914.75 421.25 H1923.5 A2 2 0 0 0 1925.5 419.25 V414.3" fill="none" stroke="#6b6d82" stroke-width="1.5" stroke-linecap="round"/><path d="M1915.2 418.9 L1918.1 418.12 L1925.25 410.47 L1923.13 408.35 L1915.98 416 Z" fill="#4c4e64"/><path d="M1925.74 409.98 L1926.66 409.06 L1924.54 406.94 L1923.62 407.86 Z" fill="#4c4e64"/><rect x="1940.5" y="408" width="12.7" height="2.3" rx="1.1" fill="#4c4e64"/><path d="M1945.4 408.2 A1.5 1.2 0 0 1 1948.4 408.2 Z" fill="#4c4e64"/><path d="M1942.6 410.2 L1942.9 420 A1.3 1.3 0 0 0 1944.2 421.2 H1949.6 A1.3 1.3 0 0 0 1950.9 420 L1951.2 410.2" fill="none" stroke="#6b6d82" stroke-width="1.3"/><path d="M1944.5 412.3 V418.8 M1949.4 412.3 V418.8" stroke="#4c4e64" stroke-width="1.1" stroke-linecap="round"/><path d="M1946.95 412.3 V418.8" stroke="#9a9cad" stroke-width="1.1" stroke-linecap="round"/></g></svg>
<div class="b" style="left:390px;top:665.32px;width:1588px;height:1px;background:#e3e5ed;"></div>
<span class="t" style="left:405.22px;top:685.97px;font-size:16.4px;color:#1b7a6b;letter-spacing:0.912px;-webkit-text-stroke:0.22px #1b7a6b;">Magazynowanie</span>
<span class="t" style="left:760.52px;top:685.97px;font-size:16.4px;color:#1e2033;letter-spacing:-0.181px;-webkit-text-stroke:0.22px #1e2033;">1 500,00 zł</span>
<span class="t" style="left:869.52px;top:685.97px;font-size:16.4px;color:#1b7a6b;letter-spacing:0.934px;-webkit-text-stroke:0.22px #1b7a6b;">Meble</span>
<span class="t" style="left:1137.02px;top:685.97px;font-size:16.4px;color:#1e2033;letter-spacing:0.736px;-webkit-text-stroke:0.22px #1e2033;">Koszt magazynowania mebli</span>
<svg class="b" style="left:1910px;top:682.65px" width="46" height="22" viewBox="1910 404 46 22"><g><path d="M1920.2 408.05 H1914.75 A2 2 0 0 0 1912.75 410.05 V419.25 A2 2 0 0 0 1914.75 421.25 H1923.5 A2 2 0 0 0 1925.5 419.25 V414.3" fill="none" stroke="#6b6d82" stroke-width="1.5" stroke-linecap="round"/><path d="M1915.2 418.9 L1918.1 418.12 L1925.25 410.47 L1923.13 408.35 L1915.98 416 Z" fill="#4c4e64"/><path d="M1925.74 409.98 L1926.66 409.06 L1924.54 406.94 L1923.62 407.86 Z" fill="#4c4e64"/><rect x="1940.5" y="408" width="12.7" height="2.3" rx="1.1" fill="#4c4e64"/><path d="M1945.4 408.2 A1.5 1.2 0 0 1 1948.4 408.2 Z" fill="#4c4e64"/><path d="M1942.6 410.2 L1942.9 420 A1.3 1.3 0 0 0 1944.2 421.2 H1949.6 A1.3 1.3 0 0 0 1950.9 420 L1951.2 410.2" fill="none" stroke="#6b6d82" stroke-width="1.3"/><path d="M1944.5 412.3 V418.8 M1949.4 412.3 V418.8" stroke="#4c4e64" stroke-width="1.1" stroke-linecap="round"/><path d="M1946.95 412.3 V418.8" stroke="#9a9cad" stroke-width="1.1" stroke-linecap="round"/></g></svg>
<div class="b" style="left:390px;top:721.0500000000001px;width:1588px;height:1px;background:#e3e5ed;"></div>
<span class="t" style="left:405.22px;top:741.70px;font-size:16.4px;color:#1b7a6b;letter-spacing:0.598px;-webkit-text-stroke:0.22px #1b7a6b;">Ogłoszenia</span>
<span class="t" style="left:757.52px;top:741.70px;font-size:16.4px;color:#1e2033;letter-spacing:0.119px;-webkit-text-stroke:0.22px #1e2033;">2 000,00 zł</span>
<span class="t" style="left:869.52px;top:741.70px;font-size:16.4px;color:#1b7a6b;letter-spacing:0.934px;-webkit-text-stroke:0.22px #1b7a6b;">Meble</span>
<span class="t" style="left:1137.02px;top:741.70px;font-size:16.4px;color:#1e2033;letter-spacing:0.669px;-webkit-text-stroke:0.22px #1e2033;">Ogłoszenia na portalach sprzedażowych</span>
<svg class="b" style="left:1910px;top:738.38px" width="46" height="22" viewBox="1910 404 46 22"><g><path d="M1920.2 408.05 H1914.75 A2 2 0 0 0 1912.75 410.05 V419.25 A2 2 0 0 0 1914.75 421.25 H1923.5 A2 2 0 0 0 1925.5 419.25 V414.3" fill="none" stroke="#6b6d82" stroke-width="1.5" stroke-linecap="round"/><path d="M1915.2 418.9 L1918.1 418.12 L1925.25 410.47 L1923.13 408.35 L1915.98 416 Z" fill="#4c4e64"/><path d="M1925.74 409.98 L1926.66 409.06 L1924.54 406.94 L1923.62 407.86 Z" fill="#4c4e64"/><rect x="1940.5" y="408" width="12.7" height="2.3" rx="1.1" fill="#4c4e64"/><path d="M1945.4 408.2 A1.5 1.2 0 0 1 1948.4 408.2 Z" fill="#4c4e64"/><path d="M1942.6 410.2 L1942.9 420 A1.3 1.3 0 0 0 1944.2 421.2 H1949.6 A1.3 1.3 0 0 0 1950.9 420 L1951.2 410.2" fill="none" stroke="#6b6d82" stroke-width="1.3"/><path d="M1944.5 412.3 V418.8 M1949.4 412.3 V418.8" stroke="#4c4e64" stroke-width="1.1" stroke-linecap="round"/><path d="M1946.95 412.3 V418.8" stroke="#9a9cad" stroke-width="1.1" stroke-linecap="round"/></g></svg>
<div class="b" style="left:386.5px;top:610px;width:1617.7px;height:171.6px;background:transparent;border-radius:9px;border:8px solid #b0174b;"></div>
<div class="b" style="left:355.4px;top:843.4px;width:243.6px;height:41.2px;background:#cfece7;border-radius:6.5px;"></div>
<svg class="b" style="left:378.6px;top:857.3px;" width="11" height="16" viewBox="0 0 11 16"><path d="M8.6 1.8 L2.4 7.9 L8.6 14" fill="none" stroke="#04766f" stroke-width="1.4"/></svg>
<span class="t" style="left:399.72px;top:856.74px;font-size:14.6px;color:#0b6f67;letter-spacing:0.766px;-webkit-text-stroke:0.3px #0b6f67;">Wyświetl zabezpieczenia</span>
<div class="b" style="left:1806.4px;top:843.4px;width:207.5px;height:41.2px;background:#cfece7;border-radius:6.5px;"></div>
<span class="t" style="left:1826.02px;top:856.84px;font-size:14.6px;color:#0b6f67;letter-spacing:0.886px;-webkit-text-stroke:0.3px #0b6f67;">Wyświetl symulację</span>
<svg class="b" style="left:1974.6px;top:857.1px;" width="11" height="16" viewBox="0 0 11 16"><path d="M2.2 1.6 L8.2 7.9 L2.2 14.2" fill="none" stroke="#04766f" stroke-width="1.4"/></svg>
<span class="t" style="left:354.44px;top:1089.86px;font-size:16px;color:#a1a5b7;letter-spacing:0.742px;-webkit-text-stroke:0.22px #a1a5b7;">©2025</span>
<span class="t" style="left:411.84px;top:1089.86px;font-size:16px;color:#3f4254;letter-spacing:0.834px;-webkit-text-stroke:0.22px #3f4254;">Infino.legal</span>
<span class="t" style="left:1468.74px;top:1089.86px;font-size:16px;color:#7e8299;letter-spacing:1.137px;-webkit-text-stroke:0.22px #7e8299;">Kontakt:</span>
<span class="t" style="left:1549.74px;top:1089.86px;font-size:16px;color:#7e8299;letter-spacing:1.008px;-webkit-text-stroke:0.22px #7e8299;">support@infino.legal</span>
<span class="t" style="left:1731.54px;top:1089.86px;font-size:16px;color:#7e8299;letter-spacing:0.600px;-webkit-text-stroke:0.22px #7e8299;">+48 573 805 367</span>
<span class="t" style="left:1875.54px;top:1089.86px;font-size:16px;color:#7e8299;letter-spacing:1.048px;-webkit-text-stroke:0.22px #7e8299;">www.infino.legal</span>
</body></html>
